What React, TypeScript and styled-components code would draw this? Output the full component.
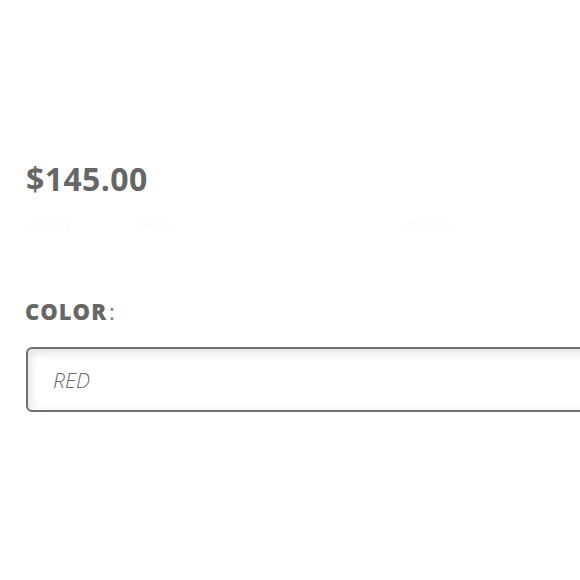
import React from "react";
import styled, { createGlobalStyle } from "styled-components";

const Global = createGlobalStyle`
  html, body { margin: 0; padding: 0; background: #ffffff; }
  body { font-family: "Open Sans", "Liberation Sans", sans-serif; }
`;

const Page = styled.div`
  width: 580px;
  height: 580px;
  overflow: hidden;
  box-sizing: border-box;
  padding: 157px 0 0 26px;
  display: flex;
  flex-direction: column;
`;

const Price = styled.div`
  font-size: 32px;
  font-weight: 700;
  line-height: 44px;
  letter-spacing: 0.4px;
  color: #666666;
`;

const Faint = styled.div`
  display: flex;
  gap: 30px;
  margin-top: 14px;
  height: 20px;
  font-size: 13px;
  color: #fbfbfb;
  line-height: 20px;
`;

const FaintItem = styled.span<{ $w: number }>`
  display: inline-block;
  width: ${(p) => p.$w}px;
`;

const Label = styled.div`
  margin-top: 62px;
  margin-left: -1px;
  font-size: 22px;
  line-height: 28px;
  color: #666666;
  display: flex;
  align-items: baseline;
`;

const LabelStrong = styled.span`
  font-weight: 800;
  letter-spacing: 1px;
`;

const Colon = styled.span`
  font-weight: 400;
  margin-left: 2px;
  color: #777777;
`;

const Select = styled.div`
  margin-top: 22px;
  width: 600px;
  height: 65px;
  box-sizing: border-box;
  border: 2px solid #6f6f6f;
  border-radius: 6px;
  background: #ffffff;
  box-shadow: inset 0 5px 9px rgba(0, 0, 0, 0.08), inset 5px 0 9px rgba(0, 0, 0, 0.05);
  display: flex;
  align-items: center;
  padding-left: 25px;
`;

const SelectText = styled.span`
  font-size: 21px;
  font-style: italic;
  font-weight: 300;
  color: #6a6a6a;
`;

export default function App() {
  return (
    <>
      <Global />
      <Page>
        <Price>$145.00</Price>
        <Faint>
          <FaintItem $w={80}>or 4 int</FaintItem>
          <FaintItem $w={60}>ments</FaintItem>
          <FaintItem $w={150}></FaintItem>
          <FaintItem $w={100}>Afterpay</FaintItem>
        </Faint>
        <Label>
          <LabelStrong>COLOR</LabelStrong>
          <Colon>:</Colon>
        </Label>
        <Select>
          <SelectText>RED</SelectText>
        </Select>
      </Page>
    </>
  );
}
